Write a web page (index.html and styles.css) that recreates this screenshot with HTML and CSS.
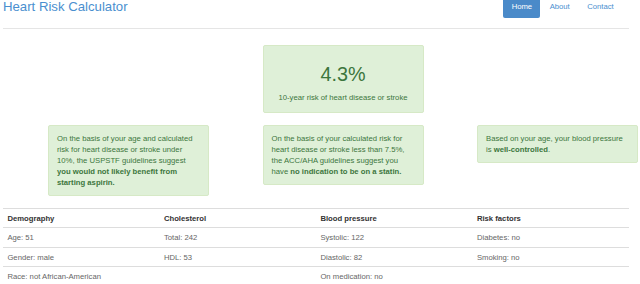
FILE: index.html
```html
<!DOCTYPE html>
<html lang="en">
<head>
    <meta charset="UTF-8">
    <meta name="viewport" content="width=device-width, initial-scale=1.0">
    <title>Heart Risk Calculator</title>
    <link rel="stylesheet" href="styles.css">
</head>
<body>
    <div class="page">
        <div class="header">
            <h3 class="brand">Heart Risk Calculator</h3>
            <ul class="nav">
                <li class="active"><a href="#">Home</a></li>
                <li><a href="#">About</a></li>
                <li><a href="#">Contact</a></li>
            </ul>
        </div>

        <div class="results">
            <div class="alert score">
                <h1>4.3%</h1>
                <p>10-year risk of heart disease or stroke</p>
            </div>
            <div class="alert first">
                On the basis of your age and calculated risk for heart disease or stroke under 10%, the USPSTF guidelines suggest <strong>you would not likely benefit from starting aspirin.</strong>
            </div>
            <div class="alert">
                On the basis of your calculated risk for heart disease or stroke less than 7.5%, the ACC/AHA guidelines suggest you have <strong>no indication to be on a statin.</strong>
            </div>
            <div class="alert">
                Based on your age, your blood pressure is <strong>well-controlled</strong>.
            </div>
        </div>

        <table class="data">
            <thead>
                <tr>
                    <th>Demography</th>
                    <th>Cholesterol</th>
                    <th>Blood pressure</th>
                    <th>Risk factors</th>
                </tr>
            </thead>
            <tbody>
                <tr>
                    <td>Age: 51</td>
                    <td>Total: 242</td>
                    <td>Systolic: 122</td>
                    <td>Diabetes: no</td>
                </tr>
                <tr>
                    <td>Gender: male</td>
                    <td>HDL: 53</td>
                    <td>Diastolic: 82</td>
                    <td>Smoking: no</td>
                </tr>
                <tr>
                    <td>Race: not African-American</td>
                    <td></td>
                    <td>On medication: no</td>
                    <td></td>
                </tr>
            </tbody>
        </table>
    </div>
</body>
</html>
```

FILE: styles.css
```css
body {
    margin: 0;
    font-family: "Liberation Sans", Arial, sans-serif;
    font-size: 7.7px;
    line-height: 11px;
    color: #333333;
    background-color: #ffffff;
}
.page {
    padding: 0 11px 0 3px;
}
.header {
    display: flex;
    justify-content: space-between;
    align-items: center;
    margin-top: -4px;
    padding: 0 7px 10px 0;
    border-bottom: 1px solid #e5e5e5;
}
.brand {
    margin: 0;
    font-size: 13.2px;
    font-weight: normal;
    line-height: 22px;
    color: #4a8fcf;
}
.nav {
    display: flex;
    list-style: none;
    margin: 0;
    padding: 0;
}
.nav li {
    margin-left: 1px;
}
.nav a {
    display: block;
    padding: 0 8.25px;
    line-height: 22px;
    color: #4a8fcf;
    text-decoration: none;
    border-radius: 2px;
}
.nav .active a {
    background-color: #4a8ac9;
    color: #ffffff;
}
.results {
    display: grid;
    grid-template-columns: 161px 161px 161px;
    column-gap: 53.5px;
    row-gap: 12px;
    align-items: start;
    margin-top: 16px;
    padding-left: 45px;
}
.alert {
    padding: 7px 8px;
    border: 1px solid #d6e9c6;
    border-radius: 2px;
    background-color: #dff0d8;
    color: #3c763d;
}
.alert.first {
    grid-column: 1;
}
.score {
    grid-column: 2;
    text-align: center;
    padding-bottom: 9px;
}
.score h1 {
    margin: 11px 0 6px;
    font-size: 19.8px;
    font-weight: normal;
    line-height: 1.1;
}
.score p {
    margin: 0;
}
.data {
    width: 100%;
    margin-top: 12px;
    border-collapse: collapse;
    table-layout: fixed;
}
.data th,
.data td {
    padding: 3.75px 4.4px;
    text-align: left;
    line-height: 11px;
    border-top: 1px solid #dddddd;
}
.data th {
    font-weight: bold;
    color: #333333;
}
.data td {
    color: #666666;
}
```
